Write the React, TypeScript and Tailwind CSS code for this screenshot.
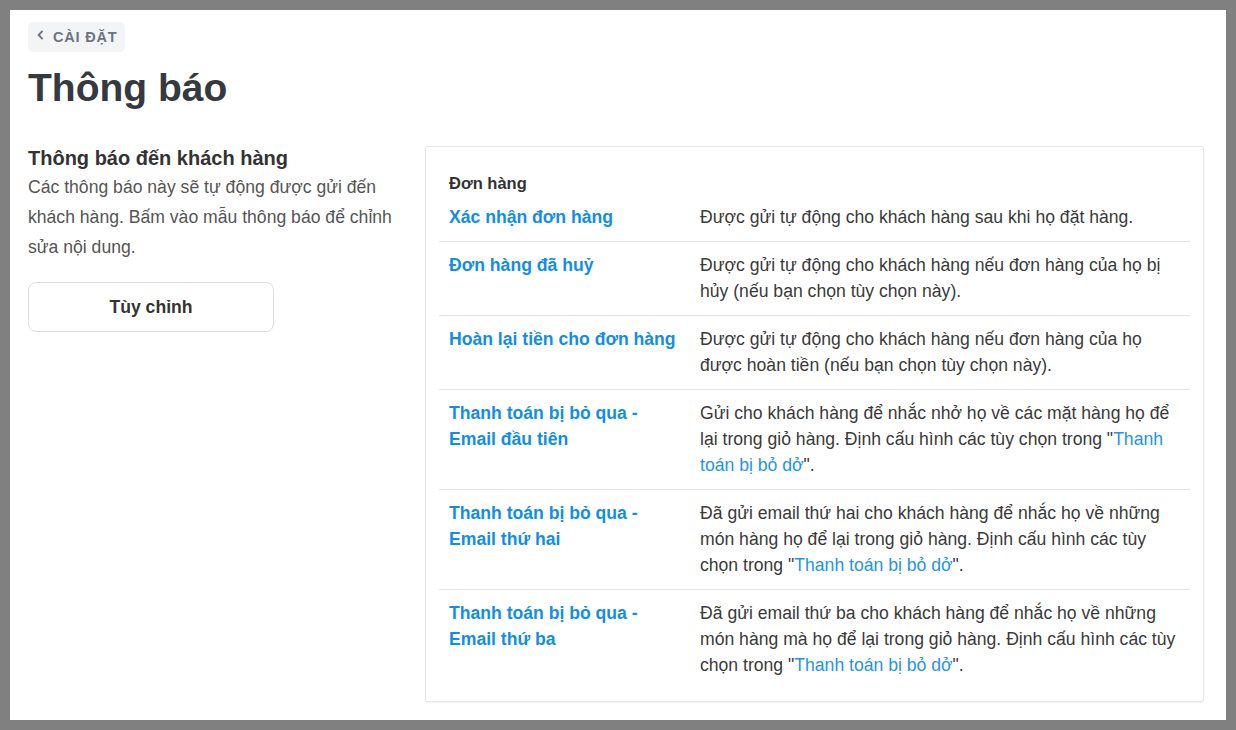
import React from "react";

type Template = {
  title: string;
  description: React.ReactNode;
};

const AbandonedLink = () => (
  <a href="#" className="text-[#1e94f0]">
    Thanh toán bị bỏ dở
  </a>
);

const templates: Template[] = [
  {
    title: "Xác nhận đơn hàng",
    description: "Được gửi tự động cho khách hàng sau khi họ đặt hàng.",
  },
  {
    title: "Đơn hàng đã huỷ",
    description:
      "Được gửi tự động cho khách hàng nếu đơn hàng của họ bị hủy (nếu bạn chọn tùy chọn này).",
  },
  {
    title: "Hoàn lại tiền cho đơn hàng",
    description:
      "Được gửi tự động cho khách hàng nếu đơn hàng của họ được hoàn tiền (nếu bạn chọn tùy chọn này).",
  },
  {
    title: "Thanh toán bị bỏ qua - Email đầu tiên",
    description: (
      <>
        Gửi cho khách hàng để nhắc nhở họ về các mặt hàng họ để lại trong giỏ hàng. Định cấu
        hình các tùy chọn trong "<AbandonedLink />".
      </>
    ),
  },
  {
    title: "Thanh toán bị bỏ qua - Email thứ hai",
    description: (
      <>
        Đã gửi email thứ hai cho khách hàng để nhắc họ về những món hàng họ để lại trong giỏ
        hàng. Định cấu hình các tùy chọn trong "<AbandonedLink />".
      </>
    ),
  },
  {
    title: "Thanh toán bị bỏ qua - Email thứ ba",
    description: (
      <>
        Đã gửi email thứ ba cho khách hàng để nhắc họ về những món hàng mà họ để lại trong giỏ
        hàng. Định cấu hình các tùy chọn trong "<AbandonedLink />".
      </>
    ),
  },
];

const App: React.FC = () => {
  return (
    <div className="bg-[#808080] p-[10px] font-['Liberation_Sans',Arial,sans-serif]">
      <div className="h-[710px] bg-white pl-[18px] pr-[22px] pt-[12px]">
        {/* Back button */}
        <button className="flex h-[30px] items-center rounded-[5px] bg-[#f3f4f6] pl-[9px] pr-[8px] text-[#6b7580]">
          <svg width="7" height="10" viewBox="0 0 7 10" className="-mt-[4px]" fill="none">
            <path d="M5.6 0.8 L1.6 5 L5.6 9.2" stroke="currentColor" strokeWidth="1.9" />
          </svg>
          <span className="ml-[9px] text-[14.5px] font-bold uppercase leading-none tracking-[0.8px]">
            Cài đặt
          </span>
        </button>

        <h1 className="mt-[12px] text-[39px] font-bold leading-[48px] text-[#343a40]">Thông báo</h1>

        <div className="mt-[34px] flex gap-[25px]">
          {/* Left column */}
          <div className="w-[372px] shrink-0">
            <h2 className="text-[20px] font-bold leading-[24px] text-[#333]">
              Thông báo đến khách hàng
            </h2>
            <p className="mt-[2px] text-[17.6px] leading-[30px] text-[#555]">
              Các thông báo này sẽ tự động được gửi đến khách hàng. Bấm vào mẫu thông báo để chỉnh
              sửa nội dung.
            </p>
            <button className="mt-[20px] h-[50px] w-[246px] rounded-[8px] border border-[#dcdcdc] bg-white text-[17.6px] font-bold text-[#333]">
              Tùy chỉnh
            </button>
          </div>

          {/* Templates card */}
          <div className="flex-1 self-start rounded-[2px] border border-[#e6e6e6] bg-white px-[13px] pb-[12px] pt-[25px] shadow-[0_1px_2px_rgba(0,0,0,0.06)]">
            <h3 className="px-[10px] text-[16.5px] font-bold leading-[22px] text-[#333]">Đơn hàng</h3>
            <div className="divide-y divide-[#e2e2e2]">
              {templates.map((t) => (
                <div key={t.title} className="grid grid-cols-[251px_1fr] pb-[11px] pt-[10px] text-[17.6px] leading-[26px]">
                  <a href="#" className="px-[10px] font-bold text-[#118ee9]">
                    {t.title}
                  </a>
                  <div className="px-[10px] text-[#3a3a3a]">{t.description}</div>
                </div>
              ))}
            </div>
          </div>
        </div>
      </div>
    </div>
  );
};

export default App;
